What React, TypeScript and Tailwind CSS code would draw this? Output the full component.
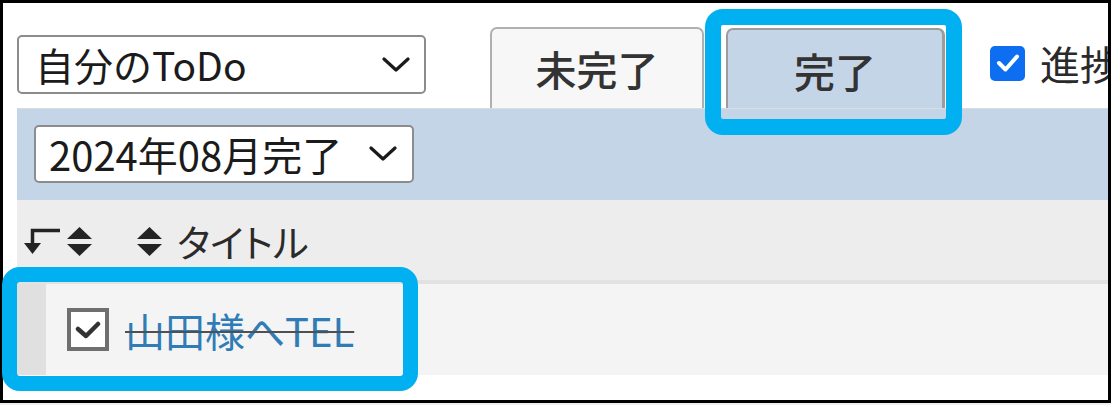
import React from 'react';

// 並べ替えアイコン（上下の三角）
const SortBoth = () => (
  <svg width="25" height="29" viewBox="0 0 25 29" className="shrink-0">
    <polygon points="12.5,0 25,12 0,12" fill="#232323" />
    <polygon points="0,17 25,17 12.5,29" fill="#232323" />
  </svg>
);

// 手動並べ替えアイコン（角付きの下矢印）
const SortManual = () => (
  <svg width="38" height="26" viewBox="0 0 38 26" className="shrink-0">
    <path d="M37 2.5 H9.5 V17" stroke="#232323" strokeWidth="3.5" fill="none" />
    <polygon points="1,15 18,15 9.5,26" fill="#232323" />
  </svg>
);

const Chevron = () => (
  <svg width="28" height="16" viewBox="0 0 28 16" className="shrink-0">
    <path d="M2 2 L14 13 L26 2" stroke="#1a1a1a" strokeWidth="3.2" fill="none" strokeLinecap="round" strokeLinejoin="round" />
  </svg>
);

export default function App() {
  const font = { fontFamily: '"Noto Sans CJK JP", "Noto Sans", sans-serif' };

  return (
    <div className="relative w-[1111px] h-[405px] bg-[#efefef]" style={font}>
      <div className="h-[403px] border-[3px] border-black bg-white pl-[14px] overflow-hidden">
        {/* 上段：表示切替とタブ */}
        <div className="flex items-start h-[105px] whitespace-nowrap">
          <div className="mt-[32px] w-[409px] h-[59px] shrink-0 flex items-center justify-between pl-[16px] pr-[14px] border-2 border-[#8c8c8c] rounded-[5px] bg-white text-[39px] leading-none text-[#1b1b1b]">
            <span>自分のToDo</span>
            <Chevron />
          </div>

          <div className="ml-[64px] mt-[24px] h-[81px] flex items-end gap-[22px] shrink-0">
            <div className="w-[214px] h-[81px] flex items-center justify-center border-2 border-b-0 border-[#b0b0b0] rounded-t-[7px] bg-[#f7f7f7] text-[41px] font-medium leading-none text-[#333]">
              未完了
            </div>
            <div className="w-[219px] h-[80px] flex items-center justify-center border-2 border-b-0 border-[#9c9c9c] border-r-[3px] rounded-t-[7px] bg-[#c5d5e8] text-[41px] font-medium leading-none text-[#333] pt-[2px]">
              完了
            </div>
          </div>

          <div className="ml-[45px] mt-[40px] flex items-center gap-[15px] shrink-0">
            <div className="w-[35px] h-[35px] rounded-[5px] bg-[#0d6ef2] flex items-center justify-center">
              <svg width="24" height="20" viewBox="0 0 24 20">
                <path d="M3 10 L9.5 16.5 L21 3.5" stroke="white" strokeWidth="4" fill="none" strokeLinecap="round" strokeLinejoin="round" />
              </svg>
            </div>
            <span className="text-[40px] leading-none text-[#2a2a2a]">進捗</span>
          </div>
        </div>

        {/* 完了月の選択 */}
        <div className="h-[92px] bg-[#c5d5e8] border-t border-[#d8dde3] pl-[17px] pt-[16px]">
          <div className="w-[380px] h-[58px] flex items-center justify-between pl-[13px] pr-[15px] border-2 border-[#8c8c8c] rounded-[5px] bg-white text-[40px] leading-none text-[#1b1b1b]">
            <span>2024年08月完了</span>
            <Chevron />
          </div>
        </div>

        {/* 見出し行 */}
        <div className="h-[84px] bg-[#ededed] border-b-4 border-[#e2e2e2] flex items-center pl-[6px] pt-[2px]">
          <SortManual />
          <div className="ml-[6px]"><SortBoth /></div>
          <div className="ml-[45px]"><SortBoth /></div>
          <span className="ml-[15px] text-[38px] leading-none text-[#2a2a2a] [font-feature-settings:'palt']">タイトル</span>
        </div>

        {/* 完了済みの行 */}
        <div className="h-[91px] bg-[#f4f4f4] flex items-center">
          <div className="w-[29px] h-full bg-[#e0e0e0]" />
          <div className="ml-[21px] w-[42px] h-[43px] border-[4px] border-[#6f6f6f] bg-white flex items-center justify-center">
            <svg width="26" height="20" viewBox="0 0 26 20">
              <path d="M3 9 L11 16 L23 4" stroke="#333" strokeWidth="4.5" fill="none" strokeLinecap="round" strokeLinejoin="round" />
            </svg>
          </div>
          <span className="ml-[16px] text-[40px] leading-none text-[#2f7cb6] line-through decoration-[#505050] decoration-2">
            山田様へTEL
          </span>
        </div>
      </div>

      {/* 強調枠 */}
      <div className="absolute left-[705px] top-[9px] w-[257px] h-[126px] border-[16px] border-[#00b0f0] rounded-[18px]" />
      <div className="absolute left-[2px] top-[267px] w-[416px] h-[124px] border-[15px] border-[#00b0f0] rounded-[18px]" />
    </div>
  );
}
